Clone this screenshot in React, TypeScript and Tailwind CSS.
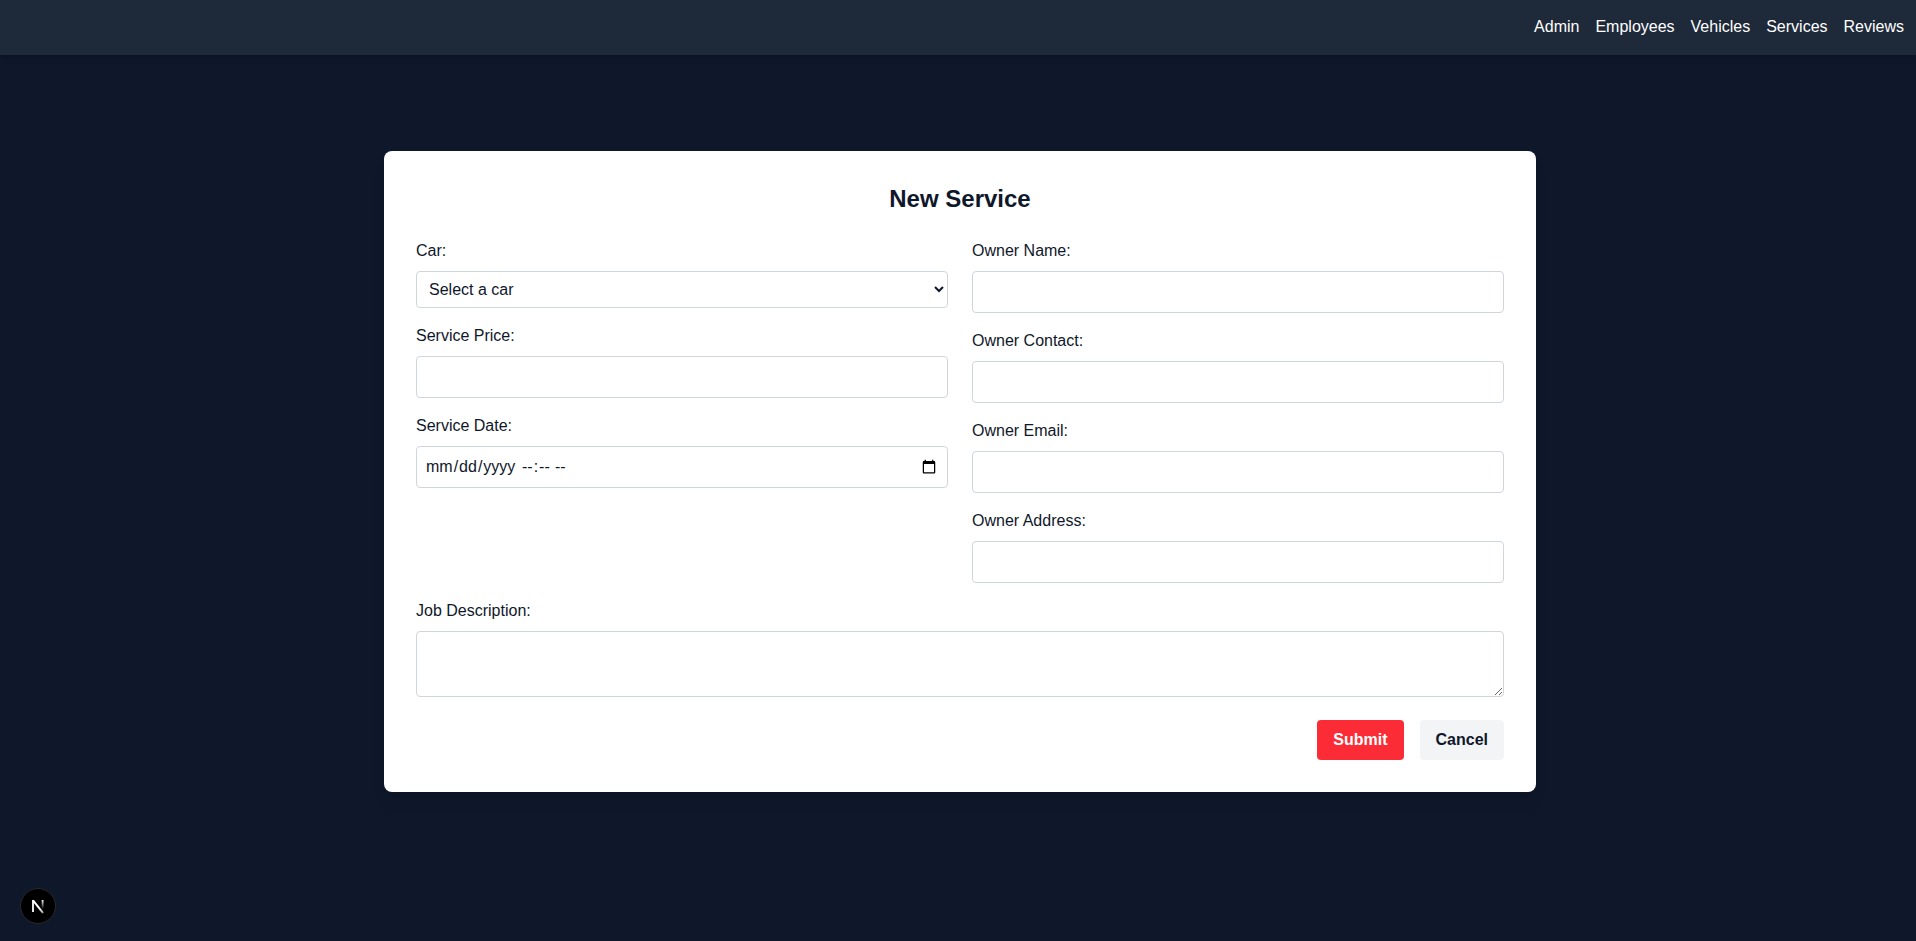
import type { ReactNode } from "react";

const links = ["Admin", "Employees", "Vehicles", "Services", "Reviews"];

const control = "w-full rounded border border-gray-300 p-2";

function Field({ id, label, children }: { id: string; label: string; children: ReactNode }) {
  return (
    <div>
      <label htmlFor={id} className="mb-2 block">
        {label}
      </label>
      {children}
    </div>
  );
}

// Date and time share one frame; the date's picker button sits at its right end.
function DateTimeInput({ id }: { id: string }) {
  return (
    <div className="relative flex w-full gap-1 rounded border border-gray-300 p-2">
      <input
        id={id}
        type="date"
        className="h-6 w-[92px] [&::-webkit-calendar-picker-indicator]:absolute [&::-webkit-calendar-picker-indicator]:top-2.5 [&::-webkit-calendar-picker-indicator]:right-2"
      />
      <input
        type="time"
        aria-label="Service time"
        className="h-6 [&::-webkit-calendar-picker-indicator]:hidden"
      />
    </div>
  );
}

function NextBadge() {
  return (
    <button
      type="button"
      aria-label="Open Next.js Dev Tools"
      className="fixed bottom-[17px] left-5 flex size-9 items-center justify-center rounded-full border border-[#2a2a2a] bg-black"
    >
      <svg width="36" height="36" viewBox="0 0 36 36" fill="none" className="shrink-0">
        <defs>
          <linearGradient id="diagonal" x1="19" y1="20" x2="24" y2="26" gradientUnits="userSpaceOnUse">
            <stop stopColor="#fff" />
            <stop offset="0.7" stopColor="#fff" stopOpacity="0.7" />
            <stop offset="1" stopColor="#fff" stopOpacity="0" />
          </linearGradient>
          <linearGradient id="stem" x1="22" y1="12" x2="22" y2="21" gradientUnits="userSpaceOnUse">
            <stop stopColor="#fff" />
            <stop offset="1" stopColor="#fff" stopOpacity="0" />
          </linearGradient>
        </defs>
        <path d="M13 12.4L23.2 25.2" stroke="url(#diagonal)" strokeWidth="2" />
        <path d="M13 24V12" stroke="#fff" strokeWidth="1.8" />
        <path d="M22.6 12V22" stroke="url(#stem)" strokeWidth="1.8" />
      </svg>
    </button>
  );
}

export default function App() {
  return (
    <div className="min-h-screen bg-slate-900 font-['Liberation_Sans',Arial,sans-serif] text-base text-slate-900">
      <nav className="flex justify-end gap-4 bg-gray-800 pt-[15px] pr-3 pb-4 pl-4 text-white shadow-md">
        {links.map((name) => (
          <a key={name} href="#">
            {name}
          </a>
        ))}
      </nav>
      <main className="flex justify-center py-24 pl-1">
        <form className="w-full max-w-6xl space-y-4 rounded-lg bg-white p-8 shadow-lg">
          <h1 className="mb-6 text-center text-2xl font-bold">New Service</h1>
          <div className="grid grid-cols-2 gap-6">
            <div className="space-y-4">
              <Field id="car" label="Car:">
                <select id="car" className={control}>
                  <option>Select a car</option>
                </select>
              </Field>
              <Field id="price" label="Service Price:">
                <input id="price" type="number" className={control} />
              </Field>
              <Field id="date" label="Service Date:">
                <DateTimeInput id="date" />
              </Field>
            </div>
            <div className="space-y-4">
              <Field id="owner-name" label="Owner Name:">
                <input id="owner-name" type="text" className={control} />
              </Field>
              <Field id="owner-contact" label="Owner Contact:">
                <input id="owner-contact" type="tel" className={control} />
              </Field>
              <Field id="owner-email" label="Owner Email:">
                <input id="owner-email" type="email" className={control} />
              </Field>
              <Field id="owner-address" label="Owner Address:">
                <input id="owner-address" type="text" className={control} />
              </Field>
            </div>
          </div>
          <Field id="job" label="Job Description:">
            <textarea id="job" rows={2} className={control} />
          </Field>
          <div className="flex justify-end gap-4">
            <button type="submit" className="rounded bg-red-500 px-4 py-2 font-bold text-white">
              Submit
            </button>
            <button type="button" className="rounded bg-gray-100 px-4 py-2 font-bold">
              Cancel
            </button>
          </div>
        </form>
      </main>
      <NextBadge />
    </div>
  );
}
